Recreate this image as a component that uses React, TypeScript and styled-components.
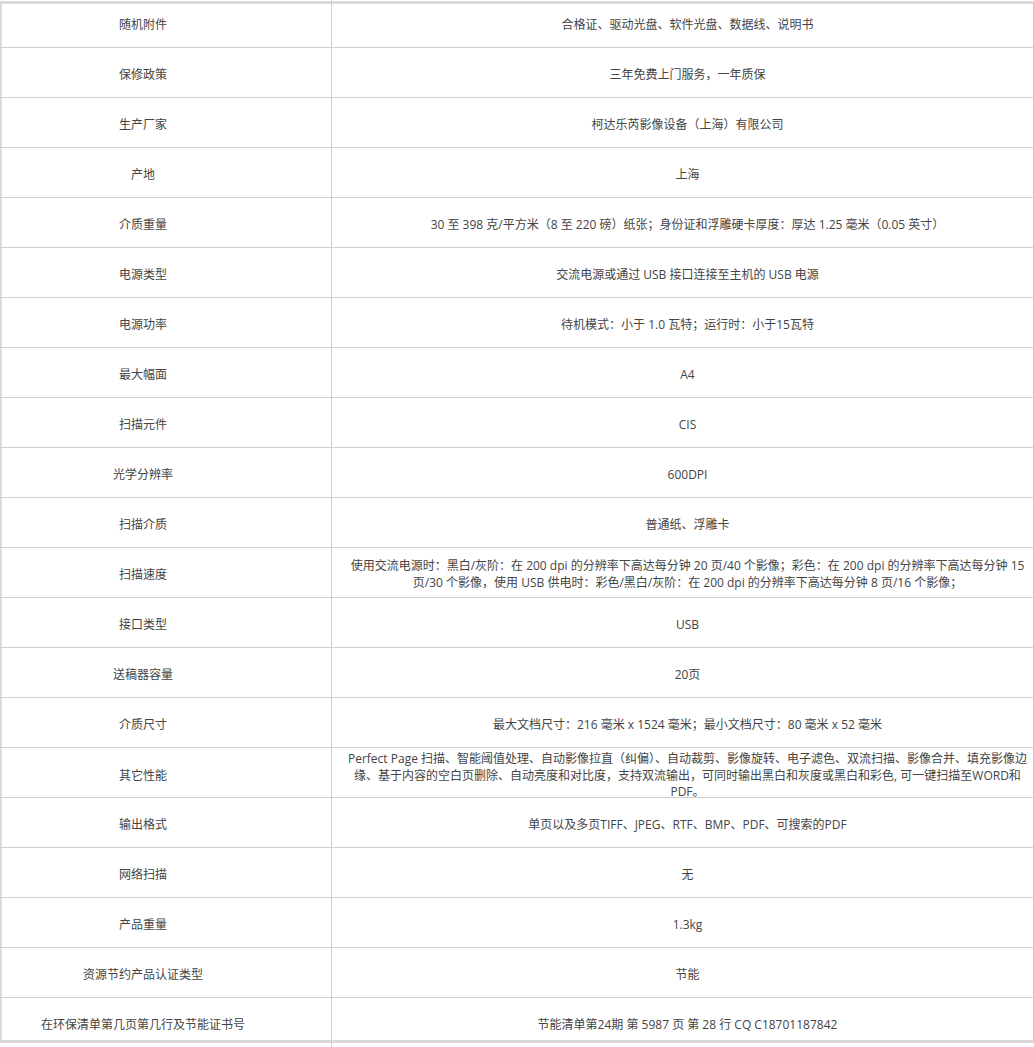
import React from "react";
import styled, { createGlobalStyle } from "styled-components";

const GlobalStyle = createGlobalStyle`
  html, body {
    margin: 0;
    padding: 0;
    background: #fff;
  }
`;

const Frame = styled.div`
  position: relative;
  width: 1034px;
  height: 1047px;
  overflow: hidden;
  background: #fff;
  font-family: "Open Sans", "Noto Sans CJK SC", sans-serif;
  font-size: 12px;
  color: #444;

  &::before {
    content: "";
    position: absolute;
    top: 1px;
    left: 0;
    right: 0;
    height: 1042px;
    box-sizing: border-box;
    border-top: 3px solid #dadada;
    border-bottom: 3px solid #dadada;
    border-left: 2px solid #dadada;
    border-right: 1px solid #c8c8c8;
    z-index: 0;
  }
`;

const SpecList = styled.div`
  position: relative;
  z-index: 1;
  margin-top: -2px;
  display: flex;
  flex-direction: column;
`;

const Row = styled.div`
  display: grid;
  grid-template-columns: 332px 1fr;
  height: 50px;
  box-sizing: border-box;
  border-bottom: 1px solid #cfcfcf;
`;

const Label = styled.div`
  display: flex;
  align-items: center;
  justify-content: center;
  box-sizing: border-box;
  padding-right: 45px;
  border-right: 1px solid #cfcfcf;
  text-align: center;
  line-height: 17px;
`;

const Value = styled.div<{ $lines?: number }>`
  display: flex;
  align-items: center;
  justify-content: center;
  box-sizing: border-box;
  padding: 0 1px 0 10px;
  text-align: center;
  line-height: ${(p) => (p.$lines && p.$lines > 2 ? "16.5px" : "17px")};
`;

const Text = styled.span`
  display: block;
  margin-top: 3px;
`;

interface Spec {
  label: string;
  value: React.ReactNode;
  lines?: number;
}

const specs: Spec[] = [
  { label: "随机附件", value: "合格证、驱动光盘、软件光盘、数据线、说明书" },
  { label: "保修政策", value: "三年免费上门服务，一年质保" },
  { label: "生产厂家", value: "柯达乐芮影像设备（上海）有限公司" },
  { label: "产地", value: "上海" },
  {
    label: "介质重量",
    value: "30 至 398 克/平方米（8 至 220 磅）纸张；身份证和浮雕硬卡厚度：厚达 1.25 毫米（0.05 英寸）",
  },
  { label: "电源类型", value: "交流电源或通过 USB 接口连接至主机的 USB 电源" },
  { label: "电源功率", value: "待机模式：小于 1.0 瓦特；运行时：小于15瓦特" },
  { label: "最大幅面", value: "A4" },
  { label: "扫描元件", value: "CIS" },
  { label: "光学分辨率", value: "600DPI" },
  { label: "扫描介质", value: "普通纸、浮雕卡" },
  {
    label: "扫描速度",
    lines: 2,
    value: (
      <>
        使用交流电源时：黑白/灰阶：在 200 dpi 的分辨率下高达每分钟 20 页/40 个影像；彩色：在 200 dpi 的分辨率下高达每分钟 15
        <br />
        页/30 个影像，使用 USB 供电时：彩色/黑白/灰阶：在 200 dpi 的分辨率下高达每分钟 8 页/16 个影像；
      </>
    ),
  },
  { label: "接口类型", value: "USB" },
  { label: "送稿器容量", value: "20页" },
  { label: "介质尺寸", value: "最大文档尺寸：216 毫米 x 1524 毫米；最小文档尺寸：80 毫米 x 52 毫米" },
  {
    label: "其它性能",
    lines: 3,
    value: (
      <>
        Perfect Page 扫描、智能阈值处理、自动影像拉直（纠偏）、自动裁剪、影像旋转、电子滤色、双流扫描、影像合并、填充影像边
        <br />
        缘、基于内容的空白页删除、自动亮度和对比度，支持双流输出，可同时输出黑白和灰度或黑白和彩色, 可一键扫描至WORD和
        <br />
        PDF。
      </>
    ),
  },
  { label: "输出格式", value: "单页以及多页TIFF、JPEG、RTF、BMP、PDF、可搜索的PDF" },
  { label: "网络扫描", value: "无" },
  { label: "产品重量", value: "1.3kg" },
  { label: "资源节约产品认证类型", value: "节能" },
  { label: "在环保清单第几页第几行及节能证书号", value: "节能清单第24期 第 5987 页 第 28 行 CQ C18701187842" },
];

const App: React.FC = () => (
  <>
    <GlobalStyle />
    <Frame>
      <SpecList>
        {specs.map((s) => (
          <Row key={s.label}>
            <Label>
              <Text>{s.label}</Text>
            </Label>
            <Value $lines={s.lines}>
              <Text>{s.value}</Text>
            </Value>
          </Row>
        ))}
      </SpecList>
    </Frame>
  </>
);

export default App;
